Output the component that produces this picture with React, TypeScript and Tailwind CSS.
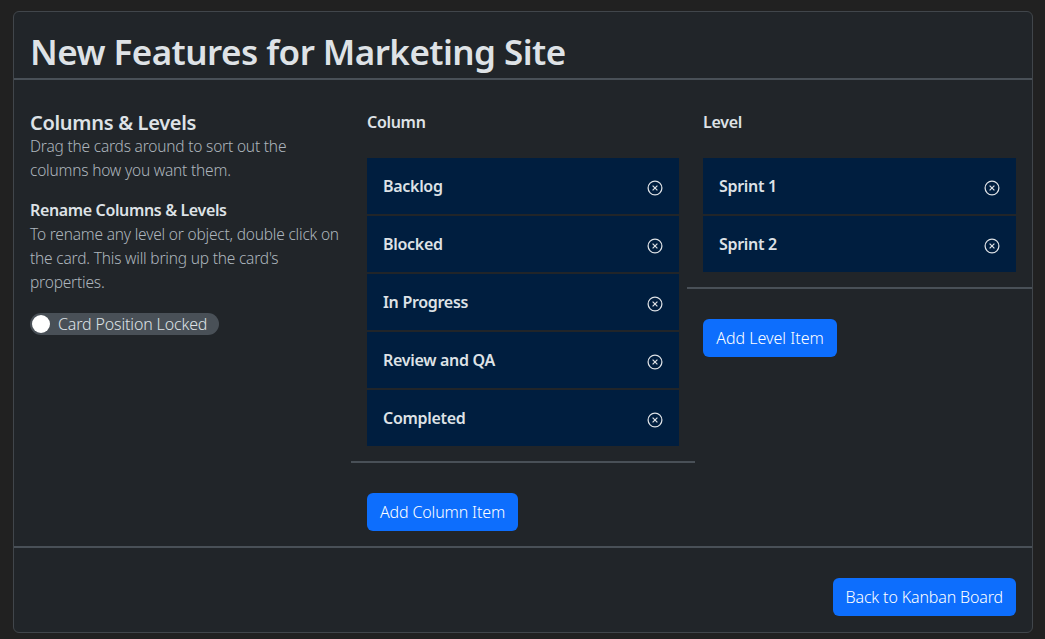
const columnItems = ["Backlog", "Blocked", "In Progress", "Review and QA", "Completed"];
const levelItems = ["Sprint 1", "Sprint 2"];

function RemoveIcon() {
  return (
    <svg width="16" height="16" viewBox="0 0 16 16" fill="none" stroke="#dee2e6" className="mt-[3px]">
      <circle cx="8" cy="8" r="6.9" strokeWidth="1.25" />
      <path d="M5.6 5.6 L10.4 10.4 M10.4 5.6 L5.6 10.4" strokeWidth="1.2" />
    </svg>
  );
}

function ItemList({ items }: { items: string[] }) {
  return (
    <div className="flex flex-col gap-[2px]">
      {items.map((item) => (
        <div key={item} className="flex h-14 items-center justify-between bg-[#001e3f] pl-4 pr-4">
          <span className="text-[16px] font-semibold tracking-[-0.3px] text-[#dee2e6]">{item}</span>
          <RemoveIcon />
        </div>
      ))}
    </div>
  );
}

function BlueButton({ label, wide }: { label: string; wide?: boolean }) {
  return (
    <button
      className={`h-[38px] rounded-md bg-[#0d6efd] text-[16px] font-light text-white ${
        wide ? "w-[134px] tracking-[0px]" : "px-[13px] tracking-[-0.15px]"
      }`}
    >
      {label}
    </button>
  );
}

export default function App() {
  return (
    <div className="min-h-[639px] bg-[#212121] pb-[6px] pl-[13px] pr-[12px] pt-[11px] font-['Noto_Sans',sans-serif]">
      <div className="flex h-[622px] flex-col rounded-md border border-[#41464b] bg-[#212529]">
        {/* Header */}
        <div className="h-[68px] border-b-2 border-[#495057] px-4 pt-[21px]">
          <h1 className="text-[35px] font-semibold leading-[38px] tracking-[-0.55px] text-[#dee2e6]">
            New Features for Marketing Site
          </h1>
        </div>

        {/* Body */}
        <div className="grid h-[468px] grid-cols-[337px_336px_1fr] border-b-2 border-[#495057]">
          <div className="pl-4 pr-2 pt-[31px]">
            <h2 className="text-[20px] font-semibold leading-[23px] tracking-[-0.3px] text-[#dee2e6]">
              Columns &amp; Levels
            </h2>
            <p className="text-[15.5px] font-light leading-6 tracking-[-0.2px] text-[#adb5bd]">
              Drag the cards around to sort out the columns how you want them.
            </p>
            <h3 className="mt-4 text-[16px] font-semibold leading-6 tracking-[-0.36px] text-[#dee2e6]">
              Rename Columns &amp; Levels
            </h3>
            <p className="text-[15.5px] font-light leading-6 tracking-[-0.2px] text-[#adb5bd]">
              To rename any level or object, double click on the card. This will bring up the card's properties.
            </p>
            <div className="mt-[19px] flex h-[22px] w-[189px] items-center rounded-full bg-[#495057] pl-[2px]">
              <span className="h-[18px] w-[18px] rounded-full bg-white" />
              <span className="ml-2 text-[16px] font-light tracking-[-0.15px] text-[#dee2e6]">Card Position Locked</span>
            </div>
          </div>

          <div>
            <div className="pl-4 pr-2 pt-[30px]">
              <h3 className="text-[16px] font-semibold leading-6 tracking-[-0.3px] text-[#dee2e6]">Column</h3>
              <div className="mt-6">
                <ItemList items={columnItems} />
              </div>
            </div>
            <hr className="mr-[-8px] mt-[15px] border-t-2 border-[#495057]" />
            <div className="pl-4 pt-[30px]">
              <BlueButton label="Add Column Item" />
            </div>
          </div>

          <div>
            <div className="px-4 pt-[30px]">
              <h3 className="text-[16px] font-semibold leading-6 tracking-[-0.3px] text-[#dee2e6]">Level</h3>
              <div className="mt-6">
                <ItemList items={levelItems} />
              </div>
            </div>
            <hr className="mt-[15px] border-t-2 border-[#495057]" />
            <div className="pl-4 pt-[30px]">
              <BlueButton label="Add Level Item" wide />
            </div>
          </div>
        </div>

        {/* Footer */}
        <div className="flex justify-end px-4 pt-[30px]">
          <BlueButton label="Back to Kanban Board" />
        </div>
      </div>
    </div>
  );
}
